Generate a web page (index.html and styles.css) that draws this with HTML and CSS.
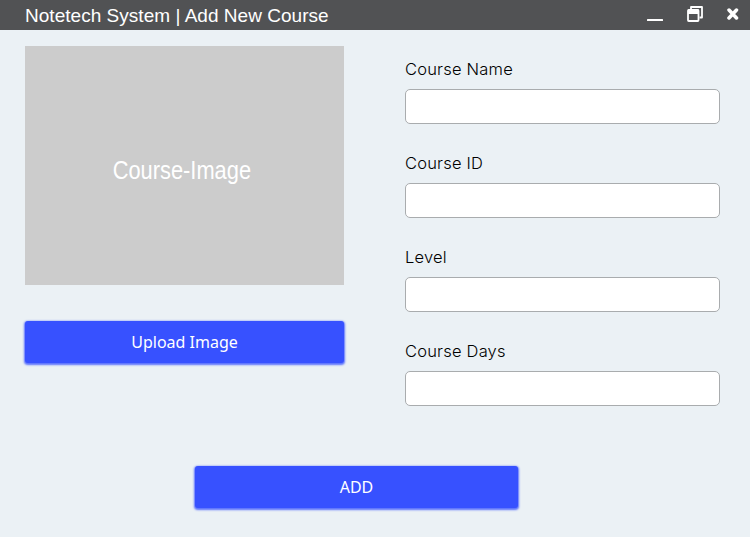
FILE: index.html
```html
<!DOCTYPE html>
<html lang="en">
<head>
<meta charset="utf-8">
<title>Notetech System | Add New Course</title>
<link rel="stylesheet" href="styles.css">
</head>
<body>
<header class="titlebar">
  <h1 class="title">Notetech System | Add New Course</h1>
  <div class="controls">
    <svg class="icon" width="16" height="18" viewBox="0 0 16 18"><rect x="0" y="14" width="16" height="2" rx=".5" fill="#fff"/></svg>
    <svg class="icon" width="16" height="18" viewBox="0 0 16 18"><g fill="none" stroke="#fff"><path d="M4 4V2H15V12.500H12.500" stroke-width="1.800" stroke-linejoin="round"/><rect x="1" y="5" width="10.500" height="11" rx=".7" stroke-width="1.800"/></g><path d="M1 4.500H12V9H1z" fill="#fff"/></svg>
    <svg class="icon" width="12" height="18" viewBox="0 0 12 18"><path d="M2 5 9.500 13M9.500 5 2 13" stroke="#fff" stroke-width="3.500" stroke-linecap="round"/></svg>
  </div>
</header>
<main class="content">
  <section class="media">
    <div class="placeholder"><span class="placeholder-text">Course-Image</span></div>
    <button class="button upload" type="button">Upload Image</button>
  </section>
  <form class="fields">
    <label class="field"><span class="label">Course Name</span><input class="input" type="text"></label>
    <label class="field"><span class="label">Course ID</span><input class="input" type="text"></label>
    <label class="field"><span class="label">Level</span><input class="input" type="text"></label>
    <label class="field"><span class="label">Course Days</span><input class="input" type="text"></label>
  </form>
</main>
<button class="button add" type="button">ADD</button>
</body>
</html>
```
FILE: styles.css
```css
* { box-sizing: border-box; }
body {
  margin: 0;
  height: 537px;
  overflow: hidden;
  background: #ebf1f5;
  font-family: "Liberation Sans", Arial, sans-serif;
}
.titlebar {
  display: flex;
  justify-content: space-between;
  height: 30px;
  padding: 0 11px 0 25px;
  background: #515254;
  color: #fff;
}
.title { margin: 0; font-size: 19px; line-height: 31px; font-weight: 400; letter-spacing: .03px; }
.controls { display: flex; gap: 24px; padding-top: 5px; }
.content { display: flex; gap: 61px; padding: 16px 30px 0 25px; height: 436px; }
.media { width: 319px; }
.placeholder {
  display: flex;
  align-items: center;
  justify-content: center;
  height: 239px;
  margin-bottom: 36px;
  padding: 10px 0 0 0;
  background: #ccc;
  color: #fff;
}
.placeholder-text { font-size: 26px; white-space: nowrap; transform: translateX(-2.5px) scaleX(.84); }
.button {
  display: block;
  height: 42px;
  padding: 0;
  border: 0;
  border-radius: 3px;
  background: #3751ff;
  box-shadow: 0 1px 2px 1px rgba(55, 81, 255, .8);
  color: #fff;
  font: 16px/42px "Noto Sans", sans-serif;
}
.upload { width: 319px; }
.add { width: 323px; margin-left: 195px; }
.fields { width: 315px; padding-top: 11px; }
.field { display: block; height: 94px; }
.label {
  display: block;
  height: 32px;
  font: 300 16.5px/25px Inter, sans-serif;
  letter-spacing: .2px;
  color: #000;
}
.input {
  display: block;
  width: 315px;
  height: 35px;
  border: 1px solid #a9acae;
  border-radius: 5px;
  background: #fff;
}
```
